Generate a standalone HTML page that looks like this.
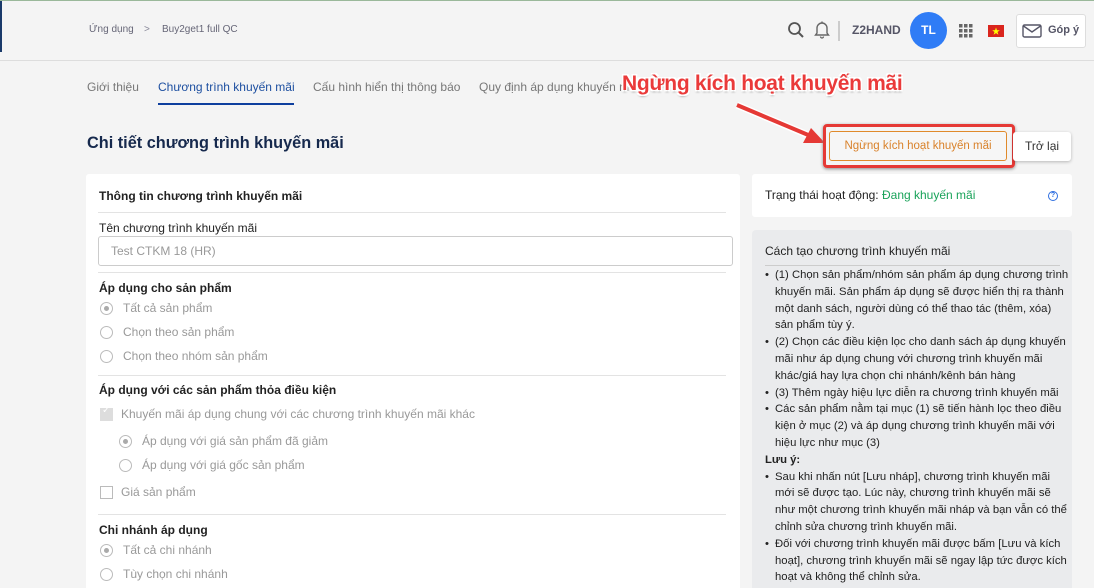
<!DOCTYPE html>
<html style="width:1094px;height:588px;overflow:hidden"><head><meta charset="utf-8"><style>
*{box-sizing:border-box;margin:0;padding:0}
body{width:1094px;height:588px;overflow:hidden;background:#f4f4f4;font-family:"Liberation Sans",Arial,sans-serif;position:relative;color:#222}
.a{position:absolute;white-space:nowrap}
.hdr{position:absolute;left:0;top:0;width:1094px;height:61px;border-bottom:1px solid #ddd;border-top:1px solid #9ab89a}
.g{color:#999;font-size:12px}
.radio{position:absolute;width:13px;height:13px;border:1px solid #bbb;border-radius:50%;background:#fff}
.radio.on::after{content:"";position:absolute;left:3px;top:3px;width:5px;height:5px;border-radius:50%;background:#aaa}
.cb{position:absolute;width:13px;height:13px;border:1px solid #bbb;background:#fff}
.hr{position:absolute;left:98px;width:628px;height:1px;background:#e3e3e3}
.help{font-size:11.3px;line-height:16.8px;color:#222}
.help div{white-space:nowrap}
</style></head><body>
<div style="position:absolute;left:0;top:0;width:2px;height:52px;background:#1a3a6a"></div>
<div class="hdr"></div>
<div class="a" style="left:89px;top:24px;font-size:10px;color:#667">Ứng dụng</div>
<div class="a" style="left:144px;top:24px;font-size:10px;color:#889">&gt;</div>
<div class="a" style="left:162px;top:24px;font-size:10px;color:#667">Buy2get1 full QC</div>
<svg class="a" style="left:787px;top:21px" width="18" height="18" viewBox="0 0 18 18"><circle cx="7.5" cy="7.5" r="5.5" fill="none" stroke="#555" stroke-width="1.8"/><line x1="11.5" y1="11.5" x2="16" y2="16" stroke="#555" stroke-width="2"/></svg>
<svg class="a" style="left:814px;top:20px" width="16" height="19" viewBox="0 0 16 19"><path d="M3 13V8a5 5 0 0110 0v5l1.5 2h-13z" fill="none" stroke="#666" stroke-width="1.4"/><path d="M6.5 16.5a1.5 1.5 0 003 0" fill="none" stroke="#666" stroke-width="1.3"/><line x1="8" y1="1.5" x2="8" y2="3" stroke="#666" stroke-width="1.4"/></svg>
<div class="a" style="left:838px;top:21px;width:2px;height:20px;background:#ccc"></div>
<div class="a" style="left:852px;top:23px;font-size:12px;font-weight:bold;color:#556">Z2HAND</div>
<div class="a" style="left:910px;top:12px;width:37px;height:37px;border-radius:50%;background:#2f7cf6;color:#fff;font-size:12px;font-weight:bold;text-align:center;line-height:37px">TL</div>
<svg class="a" style="left:959px;top:24px" width="14" height="14"><g fill="#666"><rect x="0" y="0" width="3.5" height="3.5"/><rect x="5" y="0" width="3.5" height="3.5"/><rect x="10" y="0" width="3.5" height="3.5"/><rect x="0" y="5" width="3.5" height="3.5"/><rect x="5" y="5" width="3.5" height="3.5"/><rect x="10" y="5" width="3.5" height="3.5"/><rect x="0" y="10" width="3.5" height="3.5"/><rect x="5" y="10" width="3.5" height="3.5"/><rect x="10" y="10" width="3.5" height="3.5"/></g></svg>
<svg class="a" style="left:988px;top:25px" width="16" height="12"><rect width="16" height="12" fill="#da251d"/><polygon points="8,2.5 9,5.3 11.8,5.3 9.5,7 10.4,9.8 8,8.1 5.6,9.8 6.5,7 4.2,5.3 7,5.3" fill="#ff0"/></svg>
<div class="a" style="left:1016px;top:14px;width:70px;height:34px;background:#fff;border:1px solid #ddd;border-radius:3px"></div>
<svg class="a" style="left:1022px;top:24px" width="20" height="14"><rect x="1" y="1" width="18" height="12" rx="1.5" fill="none" stroke="#556" stroke-width="1.4"/><path d="M1.5 2l8.5 6 8.5-6" fill="none" stroke="#556" stroke-width="1.4"/></svg>
<div class="a" style="left:1048px;top:24px;font-size:11px;font-weight:bold;color:#556">Góp ý</div>

<div class="a" style="left:87px;top:80px;font-size:12px;color:#777">Giới thiệu</div>
<div class="a" style="left:158px;top:80px;font-size:12px;color:#1d4fa0">Chương trình khuyến mãi</div>
<div class="a" style="left:158px;top:103px;width:136px;height:2px;background:#0e3f9e"></div>
<div class="a" style="left:313px;top:80px;font-size:12px;color:#777">Cấu hình hiển thị thông báo</div>
<div class="a" style="left:479px;top:80px;font-size:12px;color:#777">Quy định áp dụng khuyến m</div>

<div class="a" style="left:87px;top:134px;font-size:16.3px;font-weight:bold;color:#16294d">Chi tiết chương trình khuyến mãi</div>

<div class="a" style="left:622px;top:72px;font-size:21px;font-weight:bold;color:#ea3a3a;letter-spacing:-0.3px;text-shadow:-1.5px -1.5px 0 #fff,1.5px -1.5px 0 #fff,-1.5px 1.5px 0 #fff,1.5px 1.5px 0 #fff,0 2px 2px #999">Ngừng kích hoạt khuyến mãi</div>
<svg class="a" style="left:725px;top:95px" width="110" height="60"><line x1="12" y1="10" x2="90" y2="43" stroke="#fff" stroke-width="7"/><line x1="12" y1="10" x2="88" y2="42" stroke="#e53935" stroke-width="4"/><polygon points="100,48 78,48 86,33" fill="#e53935"/></svg>
<div class="a" style="left:823px;top:124px;width:192px;height:44px;border:3px solid #e53935;border-radius:4px;box-shadow:0 1px 3px #888"></div>
<div class="a" style="left:829px;top:131px;width:178px;height:30px;border:1px solid #e08a2b;border-radius:3px;background:#f6f6f6;color:#d9822b;font-size:11.5px;text-align:center;line-height:28px">Ngừng kích hoạt khuyến mãi</div>
<div class="a" style="left:1013px;top:132px;width:58px;height:29px;background:#fff;border-radius:3px;box-shadow:0 1px 3px rgba(0,0,0,.25);font-size:12px;text-align:center;line-height:29px;color:#333">Trở lại</div>

<div class="a" style="left:86px;top:174px;width:654px;height:420px;background:#fff;border-radius:3px"></div>
<div class="a" style="left:99px;top:189px;font-size:12px;font-weight:bold;color:#222">Thông tin chương trình khuyến mãi</div>
<div class="hr" style="top:212px"></div>
<div class="a" style="left:99px;top:221px;font-size:12px;color:#222">Tên chương trình khuyến mãi</div>
<div class="a" style="left:98px;top:236px;width:635px;height:30px;border:1px solid #ccc;border-radius:3px"></div>
<div class="a" style="left:111px;top:244px;font-size:12px;color:#999">Test CTKM 18 (HR)</div>
<div class="hr" style="top:272px"></div>
<div class="a" style="left:99px;top:281px;font-size:12px;font-weight:bold">Áp dụng cho sản phẩm</div>
<div class="radio on" style="left:100px;top:302px"></div><div class="a g" style="left:123px;top:301px">Tất cả sản phẩm</div>
<div class="radio" style="left:100px;top:326px"></div><div class="a g" style="left:123px;top:325px">Chọn theo sản phẩm</div>
<div class="radio" style="left:100px;top:350px"></div><div class="a g" style="left:123px;top:349px">Chọn theo nhóm sản phẩm</div>
<div class="hr" style="top:375px"></div>
<div class="a" style="left:99px;top:383px;font-size:12px;font-weight:bold">Áp dụng với các sản phẩm thỏa điều kiện</div>
<div class="cb" style="left:100px;top:408px;background:#ddd;border-color:#ddd"></div><div class="a" style="left:102px;top:405px;font-size:10px;color:#fff">✓</div>
<div class="a g" style="left:121px;top:407px">Khuyến mãi áp dụng chung với các chương trình khuyến mãi khác</div>
<div class="radio on" style="left:119px;top:435px"></div><div class="a g" style="left:142px;top:434px">Áp dụng với giá sản phẩm đã giảm</div>
<div class="radio" style="left:119px;top:459px"></div><div class="a g" style="left:142px;top:458px">Áp dụng với giá gốc sản phẩm</div>
<div class="cb" style="left:100px;top:486px"></div><div class="a g" style="left:121px;top:485px">Giá sản phẩm</div>
<div class="hr" style="top:514px"></div>
<div class="a" style="left:99px;top:523px;font-size:12px;font-weight:bold">Chi nhánh áp dụng</div>
<div class="radio on" style="left:100px;top:544px"></div><div class="a g" style="left:123px;top:543px">Tất cả chi nhánh</div>
<div class="radio" style="left:100px;top:568px"></div><div class="a g" style="left:123px;top:567px">Tùy chọn chi nhánh</div>

<div class="a" style="left:752px;top:174px;width:320px;height:43px;background:#fff;border-radius:3px"></div>
<div class="a" style="left:765px;top:188px;font-size:12px;color:#222">Trạng thái hoạt động: <span style="color:#1aa35a">Đang khuyến mãi</span></div>
<div class="a" style="left:1048px;top:191px;width:10px;height:10px;border:1.3px solid #2f6fe0;border-radius:50%;font-size:7px;color:#2f6fe0;text-align:center;line-height:8px;font-weight:bold">?</div>

<div class="a" style="left:752px;top:230px;width:320px;height:370px;background:#eaebed;border-radius:4px;overflow:hidden">
<div class="a" style="left:13px;top:14px;font-size:12px;color:#222">Cách tạo chương trình khuyến mãi</div>
<div class="a" style="left:13px;top:35px;width:295px;height:1px;background:#ccc"></div>
<div class="a help" style="left:13px;top:37px">
<div style="padding-left:10px;position:relative"><span style="position:absolute;left:0">•</span>(1) Chọn sản phẩm/nhóm sản phẩm áp dụng chương trình<br>khuyến mãi. Sản phẩm áp dụng sẽ được hiển thị ra thành<br>một danh sách, người dùng có thể thao tác (thêm, xóa)<br>sản phẩm tùy ý.</div>
<div style="padding-left:10px;position:relative"><span style="position:absolute;left:0">•</span>(2) Chọn các điều kiện lọc cho danh sách áp dụng khuyến<br>mãi như áp dụng chung với chương trình khuyến mãi<br>khác/giá hay lựa chọn chi nhánh/kênh bán hàng</div>
<div style="padding-left:10px;position:relative"><span style="position:absolute;left:0">•</span>(3) Thêm ngày hiệu lực diễn ra chương trình khuyến mãi</div>
<div style="padding-left:10px;position:relative"><span style="position:absolute;left:0">•</span>Các sản phẩm nằm tại mục (1) sẽ tiến hành lọc theo điều<br>kiện ở mục (2) và áp dụng chương trình khuyến mãi với<br>hiệu lực như mục (3)</div>
<div style="font-weight:bold">Lưu ý:</div>
<div style="padding-left:10px;position:relative"><span style="position:absolute;left:0">•</span>Sau khi nhấn nút [Lưu nháp], chương trình khuyến mãi<br>mới sẽ được tạo. Lúc này, chương trình khuyến mãi sẽ<br>như một chương trình khuyến mãi nháp và bạn vẫn có thể<br>chỉnh sửa chương trình khuyến mãi.</div>
<div style="padding-left:10px;position:relative"><span style="position:absolute;left:0">•</span>Đối với chương trình khuyến mãi được bấm [Lưu và kích<br>hoạt], chương trình khuyến mãi sẽ ngay lập tức được kích<br>hoạt và không thể chỉnh sửa.</div>
</div>
</div>
</body></html>
